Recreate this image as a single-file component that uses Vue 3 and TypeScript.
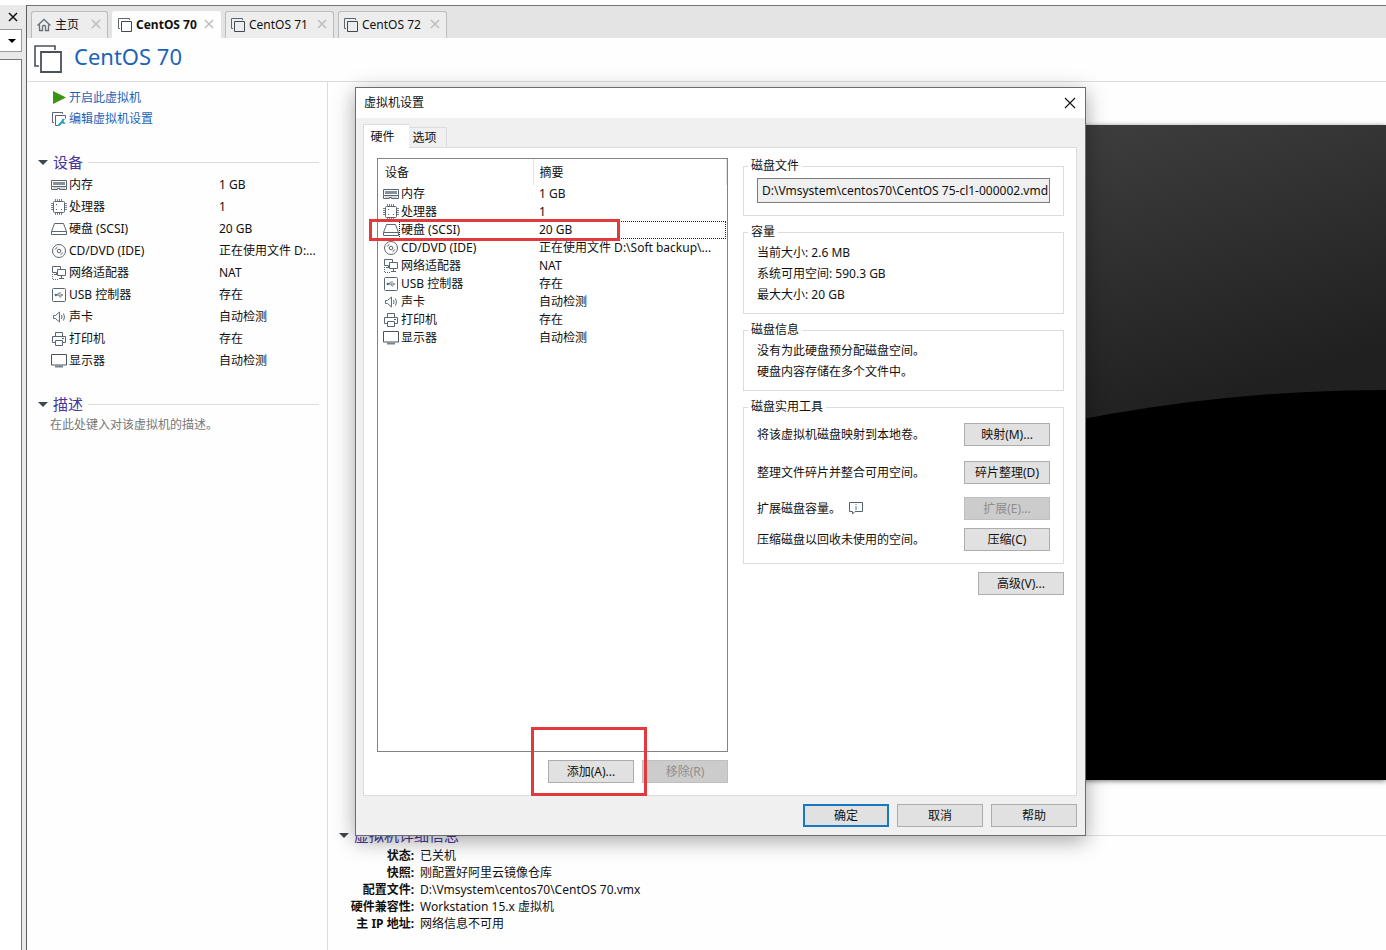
<script setup lang="ts">
import { ref } from 'vue'

interface Device {
  icon: string
  name: string
  short: string
  summary: string
}

const devices: Device[] = [
  { icon: 'memory', name: '内存', short: '1 GB', summary: '1 GB' },
  { icon: 'cpu', name: '处理器', short: '1', summary: '1' },
  { icon: 'disk', name: '硬盘 (SCSI)', short: '20 GB', summary: '20 GB' },
  { icon: 'cd', name: 'CD/DVD (IDE)', short: '正在使用文件 D:...', summary: '正在使用文件 D:\\Soft backup\\...' },
  { icon: 'net', name: '网络适配器', short: 'NAT', summary: 'NAT' },
  { icon: 'usb', name: 'USB 控制器', short: '存在', summary: '存在' },
  { icon: 'sound', name: '声卡', short: '自动检测', summary: '自动检测' },
  { icon: 'printer', name: '打印机', short: '存在', summary: '存在' },
  { icon: 'display', name: '显示器', short: '自动检测', summary: '自动检测' },
]

const tabs = [
  { icon: 'home', label: '主页', wide: false },
  { icon: 'vm', label: 'CentOS 70', wide: true },
  { icon: 'vm', label: 'CentOS 71', wide: true },
  { icon: 'vm', label: 'CentOS 72', wide: true },
]

const details = [
  ['状态:', '已关机'],
  ['快照:', '刚配置好阿里云镜像仓库'],
  ['配置文件:', 'D:\\Vmsystem\\centos70\\CentOS 70.vmx'],
  ['硬件兼容性:', 'Workstation 15.x 虚拟机'],
  ['主 IP 地址:', '网络信息不可用'],
]

const capacity = ['当前大小: 2.6 MB', '系统可用空间: 590.3 GB', '最大大小: 20 GB']
const diskInfo = ['没有为此硬盘预分配磁盘空间。', '硬盘内容存储在多个文件中。']
const utilities = [
  { text: '将该虚拟机磁盘映射到本地卷。', button: '映射(M)...', disabled: false, info: false },
  { text: '整理文件碎片并整合可用空间。', button: '碎片整理(D)', disabled: false, info: false },
  { text: '扩展磁盘容量。', button: '扩展(E)...', disabled: true, info: true },
  { text: '压缩磁盘以回收未使用的空间。', button: '压缩(C)', disabled: false, info: false },
]

const activeTab = ref(1)
const selected = ref(2)
const diskFile = ref('D:\\Vmsystem\\centos70\\CentOS 75-cl1-000002.vmd')
</script>

<template>
  <svg class="defs" aria-hidden="true">
    <symbol id="i-memory" viewBox="0 0 16 16">
      <path d="M.5 3.500h15v6H.5zM.5 9.500v3h6v-1h2v1h7v-3" fill="none" stroke="#5a6772" />
      <path d="M2 5h12v3H2z" fill="#87919a" />
      <path d="M2.500 11h11" stroke="#5a6772" stroke-dasharray="1 1" />
    </symbol>
    <symbol id="i-cpu" viewBox="0 0 16 16">
      <path d="M4.500 0v3M6.500 0v3M8.500 0v3M10.500 0v3M4.500 13v3M6.500 13v3M8.500 13v3M10.500 13v3M0 4.500h3M0 6.500h3M0 8.500h3M0 10.500h3M13 4.500h3M13 6.500h3M13 8.500h3M13 10.500h3" stroke="#7b858e" />
      <rect x="2.500" y="2.500" width="11" height="11" rx="1" fill="#fff" stroke="#5a6772" />
      <path d="M5 5h1v1H5zM10 10h1v1h-1zM5 10h1v1H5z" fill="#5a6772" />
    </symbol>
    <symbol id="i-disk" viewBox="0 0 16 16">
      <path d="M3.500 2.500h9l3 8v3H.5v-3zM.5 10.500h15" fill="none" stroke="#5a6772" />
    </symbol>
    <symbol id="i-cd" viewBox="0 0 16 16">
      <circle cx="8" cy="8" r="6.500" fill="none" stroke="#5a6772" />
      <circle cx="8" cy="8" r="1.800" fill="none" stroke="#5a6772" />
      <path d="M4.300 6.500A4 4 0 0 1 6.500 4.300M11.700 9.500A4 4 0 0 1 9.500 11.700" fill="none" stroke="#5a6772" />
    </symbol>
    <symbol id="i-net" viewBox="0 0 16 16">
      <path d="M5.500 7.500h-4v-6h8v3M5.500 7.500v2M3 9.500h3M6.500 4.500h8v6h-8zM10.500 10.500v3M8 13.500h5" fill="none" stroke="#5a6772" />
      <path d="M1.500 9v5.500M2 14.500h6" fill="none" stroke="#5a6772" stroke-dasharray="1 1" />
    </symbol>
    <symbol id="i-usb" viewBox="0 0 16 16">
      <rect x="1.500" y="1.500" width="13" height="13" rx="1" fill="none" stroke="#5a6772" />
      <path d="M4.500 8h7M6 8l1.500-2H10M7.500 8l1.500 2h1.500" fill="none" stroke="#6f7b85" />
      <circle cx="4.800" cy="8" r="1.200" fill="#5a6772" />
      <path d="M10.500 6.800L12.500 8l-2 1.200z" fill="#6f7b85" />
    </symbol>
    <symbol id="i-sound" viewBox="0 0 16 16">
      <path d="M2.500 6.500h2l4-3.500v10l-4-3.500h-2z" fill="none" stroke="#587080" />
      <path d="M10.500 6q1 2 0 4M12.500 4.500q2 3.500 0 7" fill="none" stroke="#587080" />
    </symbol>
    <symbol id="i-printer" viewBox="0 0 16 16">
      <path d="M4.500 5.500v-4h7v4M4.500 11.500h-3v-6h13v6h-3M4.500 9.500h7v5h-7z" fill="none" stroke="#5a6772" />
      <path d="M11 7.500h2" stroke="#5a6772" />
    </symbol>
    <symbol id="i-display" viewBox="0 0 16 16">
      <path d="M.5 1.500h15v10.500H.5z" fill="none" stroke="#4a555f" />
      <path d="M4 13.500h8" stroke="#7b858e" stroke-width="2" />
    </symbol>
    <symbol id="i-home" viewBox="0 0 16 16">
      <path d="M1.500 8.500L8 2.500l6.500 6M3.500 7.500v6h3v-4q0-1 1-1h1q1 0 1 1v4h3v-6" fill="none" stroke="#66717a" stroke-width="1.300" />
    </symbol>
    <symbol id="i-vm" viewBox="0 0 16 16">
      <path d="M3 11.500H1.500v-10h11V3" fill="none" stroke="#5a6772" />
      <path d="M4.500 4.500h10v10h-10z" fill="none" stroke="#3f4a54" />
    </symbol>
    <symbol id="i-edit" viewBox="0 0 16 16">
      <path d="M3 11.500H1.500v-10h10V3M7.500 14.500h-3v-10h10v3" fill="none" stroke="#5a6772" />
      <path d="M7.500 14.500l4-4" stroke="#1c9fc0" stroke-width="2" />
      <path d="M14 8a2.500 2.500 0 1 0 .8 4l-2-.7-.2-1.500z" fill="#1c9fc0" />
    </symbol>
    <symbol id="i-play" viewBox="0 0 16 16">
      <path d="M2 1L15 7.500 2 14z" fill="#3a9413" />
    </symbol>
    <symbol id="i-x" viewBox="0 0 10 10">
      <path d="M1 1l8 8M9 1L1 9" fill="none" stroke="currentColor" stroke-width="1.500" />
    </symbol>
    <symbol id="i-thin-x" viewBox="0 0 12 12">
      <path d="M1 1l10 10M11 1L1 11" fill="none" stroke="currentColor" stroke-width="1.100" />
    </symbol>
  </svg>

  <div class="app">
    <aside class="library">
      <button class="library-close" aria-label="关闭"><svg class="x"><use href="#i-x" /></svg></button>
      <button class="library-combo" aria-label="搜索"><i class="tri"></i></button>
      <div class="library-tree"></div>
    </aside>

    <div class="workspace">
      <nav class="tabs">
        <div v-for="(t, i) in tabs" :key="t.label" class="tab" :class="{ active: i === activeTab, wide: t.wide }">
          <button class="tab-main" @click="activeTab = i">
            <svg class="icon"><use :href="'#i-' + t.icon" /></svg><span>{{ t.label }}</span>
          </button>
          <button class="tab-close" :aria-label="'关闭 ' + t.label"><svg class="x"><use href="#i-x" /></svg></button>
        </div>
      </nav>

      <header class="title">
        <svg class="title-icon" viewBox="0 0 28 28" aria-hidden="true">
          <path d="M5 21H1V1h20v4" fill="none" stroke="#4a5258" stroke-width="1.600" />
          <path d="M7 7h20v20H7z" fill="#fff" stroke="#4a5258" stroke-width="1.800" />
        </svg>
        <h1>CentOS 70</h1>
      </header>

      <div class="columns">
        <section class="side">
          <div class="actions">
            <a href="#"><svg class="icon"><use href="#i-play" /></svg>开启此虚拟机</a>
            <a href="#"><svg class="icon"><use href="#i-edit" /></svg>编辑虚拟机设置</a>
          </div>
          <h2 class="heading"><i class="tri"></i><span>设备</span></h2>
          <ul class="devices">
            <li v-for="d in devices" :key="d.name">
              <svg class="icon"><use :href="'#i-' + d.icon" /></svg>
              <span class="device-name">{{ d.name }}</span>
              <span class="device-value">{{ d.short }}</span>
            </li>
          </ul>
          <h2 class="heading"><i class="tri"></i><span>描述</span></h2>
          <p class="placeholder">在此处键入对该虚拟机的描述。</p>
        </section>

        <section class="main">
          <div class="preview">
            <svg viewBox="0 0 1014 655" preserveAspectRatio="xMaxYMin slice" aria-hidden="true">
              <defs>
                <linearGradient id="screen" gradientUnits="userSpaceOnUse" x1="700" y1="0" x2="790" y2="290">
                  <stop offset="0" stop-color="#3e3e3e" />
                  <stop offset="1" stop-color="#202020" />
                </linearGradient>
              </defs>
              <rect width="1014" height="655" fill="url(#screen)" />
              <circle cx="1014" cy="1872" r="1607" fill="#000" />
            </svg>
          </div>
          <h2 class="heading"><i class="tri"></i><span>虚拟机详细信息</span></h2>
          <dl class="details">
            <template v-for="[k, v] in details" :key="k">
              <dt>{{ k }}</dt>
              <dd>{{ v }}</dd>
            </template>
          </dl>
        </section>
      </div>
    </div>

    <div class="dialog" role="dialog" aria-labelledby="dialog-title">
      <div class="dialog-title">
        <span id="dialog-title">虚拟机设置</span>
        <button class="dialog-close" aria-label="关闭"><svg><use href="#i-thin-x" /></svg></button>
      </div>
      <div class="dialog-body">
        <div class="dialog-tabs" role="tablist">
          <button class="dtab current" role="tab" aria-selected="true">硬件</button>
          <button class="dtab" role="tab" aria-selected="false">选项</button>
        </div>
        <div class="panel">
          <div class="hardware">
            <div class="list">
              <table>
                <thead>
                  <tr><th>设备</th><th>摘要</th></tr>
                </thead>
                <tbody>
                  <tr v-for="(d, i) in devices" :key="d.name" :class="{ selected: i === selected }" @click="selected = i">
                    <td>
                      <div class="cell"><svg class="icon"><use :href="'#i-' + d.icon" /></svg><span>{{ d.name }}</span></div>
                    </td>
                    <td>{{ d.summary }}</td>
                  </tr>
                </tbody>
              </table>
              <div class="mark mark-row"></div>
            </div>
            <div class="list-actions">
              <div class="add-wrap">
                <button class="btn">添加(A)...</button>
                <div class="mark mark-add"></div>
              </div>
              <button class="btn" disabled>移除(R)</button>
            </div>
          </div>

          <div class="settings">
            <fieldset class="file-group">
              <legend><label for="disk-file">磁盘文件</label></legend>
              <input id="disk-file" v-model="diskFile" type="text" readonly />
            </fieldset>
            <fieldset>
              <legend>容量</legend>
              <p v-for="line in capacity" :key="line">{{ line }}</p>
            </fieldset>
            <fieldset>
              <legend>磁盘信息</legend>
              <p v-for="line in diskInfo" :key="line">{{ line }}</p>
            </fieldset>
            <fieldset class="tools-group">
              <legend>磁盘实用工具</legend>
              <div class="tools">
                <div v-for="u in utilities" :key="u.button" class="tool">
                  <span>{{ u.text }}</span>
                  <svg v-if="u.info" class="info" viewBox="0 0 14 13" aria-hidden="true">
                    <path d="M.5.5h13v9H6l-2.500 2.500V9.500h-3z" fill="#fff" stroke="#4f646c" />
                    <path d="M7 2v1M7 4v4" stroke="#4f7482" />
                  </svg>
                  <button class="btn" :disabled="u.disabled">{{ u.button }}</button>
                </div>
              </div>
            </fieldset>
            <button class="btn advanced">高级(V)...</button>
          </div>
        </div>
        <div class="dialog-actions">
          <button class="btn default">确定</button>
          <button class="btn">取消</button>
          <button class="btn">帮助</button>
        </div>
      </div>
    </div>
  </div>
</template>

<style>
body {
  margin: 0;
  background: #fff;
}
</style>

<style scoped>
.defs {
  position: absolute;
  width: 0;
  height: 0;
}
.app,
.app * {
  box-sizing: border-box;
}
.app {
  position: relative;
  display: flex;
  min-height: 100vh;
  padding-top: 5px;
  overflow: hidden;
  background: #fdfdfd;
  color: #111;
  font: 12px/18px 'Noto Sans', 'Noto Sans CJK SC', sans-serif;
}
button {
  padding: 0;
  border: 0;
  background: none;
  color: inherit;
  font: inherit;
}
h1,
h2,
p,
ul,
dl,
dd {
  margin: 0;
  padding: 0;
}
svg {
  display: block;
  flex: none;
}
.icon {
  width: 16px;
  height: 16px;
}
.x {
  width: 10px;
  height: 10px;
}
.tri {
  flex: none;
  border: 5px solid transparent;
  border-top-color: #3f474c;
  border-bottom: 0;
}

.library {
  display: flex;
  flex: none;
  flex-direction: column;
  width: 26px;
  padding-right: 4px;
  background: #e9e9e9;
}
.library-close {
  display: flex;
  align-items: center;
  justify-content: flex-end;
  height: 24px;
  padding-right: 4px;
}
.library-combo {
  display: flex;
  align-items: center;
  justify-content: flex-end;
  height: 23px;
  margin-bottom: 7px;
  padding-right: 5px;
  border: 1px solid #9a9a9a;
  border-left: 0;
  background: #fff;
}
.library-combo .tri {
  border-width: 4px 4px 0;
  border-top-color: #000;
}
.library-tree {
  flex: 1;
  border: 1px solid #75797d;
  border-width: 1px 1px 0 0;
  background: #fff;
}

.workspace {
  display: flex;
  flex: 1;
  flex-direction: column;
  min-width: 0;
  border-top: 1px solid #707476;
  border-left: 1px solid #5a5e60;
  background: #fefefe;
}
.tabs {
  display: flex;
  gap: 4px;
  padding: 5px 4px 0;
  background: #e4e4e4;
}
.tab {
  display: flex;
  align-items: center;
  justify-content: space-between;
  width: 77px;
  height: 27px;
  padding: 0 6px 0 4px;
  border: 1px solid #bcbcbc;
  border-bottom: 0;
  border-radius: 3px 3px 0 0;
  background: #ededed;
}
.tab.wide {
  width: 109px;
}
.tab.active {
  border-color: #fefefe;
  background: #fefefe;
  font-weight: 700;
}
.tab-main {
  display: flex;
  align-items: center;
  gap: 3px;
  white-space: nowrap;
}
.tab-close {
  padding-bottom: 2px;
  color: #bdbdbd;
}
.title {
  display: flex;
  align-items: center;
  gap: 12px;
  height: 44px;
  padding: 0 7px 4px;
  border-bottom: 1px solid #dcdcdc;
}
.title-icon {
  width: 28px;
  height: 28px;
  margin-top: 2px;
}
h1 {
  padding-bottom: 4px;
  color: #1c63b8;
  font-size: 22px;
  font-weight: 400;
  line-height: 30px;
}

.columns {
  display: flex;
  flex: 1;
}
.side {
  flex: none;
  width: 301px;
  padding: 5px 8px 0 11px;
  border-right: 1px solid #dcdcdc;
}
.actions {
  display: flex;
  flex-direction: column;
  margin-bottom: 22px;
  padding-left: 13px;
}
.actions a {
  display: flex;
  align-items: center;
  gap: 2px;
  height: 21px;
  color: #1c63b8;
  text-decoration: none;
}
.heading {
  display: flex;
  align-items: center;
  gap: 5px;
  height: 22px;
  margin-bottom: 1px;
  color: #46389a;
  font-size: 15px;
  font-weight: 400;
  line-height: 22px;
}
.heading::after {
  flex: 1;
  height: 1px;
  background: #dcdcdc;
  content: '';
}
.devices {
  margin-bottom: 21px;
  padding-left: 13px;
  list-style: none;
}
.devices li {
  display: flex;
  align-items: center;
  gap: 2px;
  height: 22px;
  white-space: nowrap;
}
.device-name {
  width: 148px;
}
.placeholder {
  padding-left: 12px;
  color: #777;
}

.main {
  display: flex;
  flex: 1;
  flex-direction: column;
  min-width: 0;
  padding: 43px 0 18px 11px;
}
.preview {
  position: relative;
  flex: 1;
  margin: 0 0 44px 33px;
  background: #000;
  box-shadow: 0 1px 5px #777;
}
.preview svg {
  position: absolute;
  inset: 0;
  width: 100%;
  height: 100%;
}
.details {
  display: grid;
  grid-template-columns: 75px 1fr;
  column-gap: 6px;
  line-height: 17px;
}
.details dt {
  font-weight: 700;
  text-align: right;
}

.dialog {
  position: absolute;
  top: 87px;
  left: 355px;
  width: 731px;
  border: 1px solid #6a6e70;
  background: #f0f0f0;
  box-shadow: 0 5px 20px rgb(0 0 0 / 35%);
}
.dialog-title {
  display: flex;
  align-items: center;
  justify-content: space-between;
  height: 30px;
  padding: 0 9px 1px 8px;
  background: #fff;
}
.dialog-close svg {
  width: 12px;
  height: 12px;
}
.dialog-body {
  padding: 6px 8px 8px 7px;
}
.dialog-tabs {
  display: flex;
  align-items: flex-end;
}
.dtab {
  width: 38px;
  height: 20px;
  padding-right: 6px;
  border: 1px solid #dcdcdc;
  border-width: 1px 1px 0 0;
}
.dtab.current {
  z-index: 1;
  width: 46px;
  height: 24px;
  margin-bottom: -1px;
  padding-right: 8px;
  border-width: 1px 0 0 1px;
  background: #fff;
}
.panel {
  display: flex;
  gap: 15px;
  min-height: 649px;
  padding: 10px 12px 12px 13px;
  border: 1px solid #dcdcdc;
  background: #fff;
}
.hardware {
  display: flex;
  flex: none;
  flex-direction: column;
  gap: 8px;
  width: 351px;
}
.list {
  position: relative;
  flex: 1;
  border: 1px solid #7f8488;
}
table {
  width: 100%;
  border-collapse: collapse;
  table-layout: fixed;
}
th {
  height: 26px;
  padding: 2px 6px 0 7px;
  border-right: 1px solid #e2e2e2;
  font-weight: 400;
  text-align: left;
}
th:first-child {
  width: 155px;
}
th:last-child {
  padding-left: 6px;
}
td {
  height: 18px;
  padding: 0 6px;
  line-height: 18px;
  white-space: nowrap;
}
tbody tr {
  position: relative;
}
.selected td:first-child::after {
  position: absolute;
  inset: 0 1px 0 21px;
  border: 1px dotted #222;
  content: '';
}
.cell {
  display: flex;
  align-items: center;
  gap: 2px;
  margin-left: -1px;
}
.mark {
  position: absolute;
  border: 3px solid #e4393c;
  pointer-events: none;
}
.mark-row {
  top: 60px;
  left: -9px;
  width: 251px;
  height: 22px;
}
.list-actions {
  display: flex;
  justify-content: flex-end;
  gap: 8px;
}
.add-wrap {
  position: relative;
  display: flex;
}
.mark-add {
  z-index: 1;
  inset: -33px -13px -13px -17px;
}
.btn {
  width: 86px;
  height: 23px;
  border: 1px solid #adadad;
  background: #e1e1e1;
  line-height: 21px;
  white-space: nowrap;
}
.btn:disabled {
  border-color: #bfbfbf;
  background: #ccc;
  color: #8f8f8f;
}
.btn.default {
  border: 2px solid #1878c4;
  line-height: 19px;
}

.settings {
  display: flex;
  flex: 1;
  flex-direction: column;
  min-width: 0;
}
fieldset {
  min-width: 0;
  margin: 0 0 8px;
  padding: 2px 13px 8px;
  border: 1px solid #dcdcdc;
}
legend {
  margin-left: -9px;
  padding: 0 3px;
  line-height: 16px;
}
fieldset p {
  line-height: 21px;
}
.file-group {
  padding: 4px 13px 12px;
}
.file-group input {
  display: block;
  width: 100%;
  height: 25px;
  padding: 0 1px 1px 4px;
  border: 1px solid #7a7a7a;
  background: #f0f0f0;
  color: #111;
  font: inherit;
}
.tools-group {
  padding: 8px 13px 13px;
}
.tools {
  display: grid;
  grid-template-rows: 38px 36px 31px 22px;
  align-items: start;
}
.tool {
  display: flex;
  align-items: center;
}
.tool .btn {
  margin-left: auto;
}
.info {
  width: 14px;
  height: 13px;
  margin-left: 8px;
}
.advanced {
  align-self: flex-end;
}
.dialog-actions {
  display: flex;
  justify-content: flex-end;
  gap: 8px;
  padding-top: 8px;
}
</style>
